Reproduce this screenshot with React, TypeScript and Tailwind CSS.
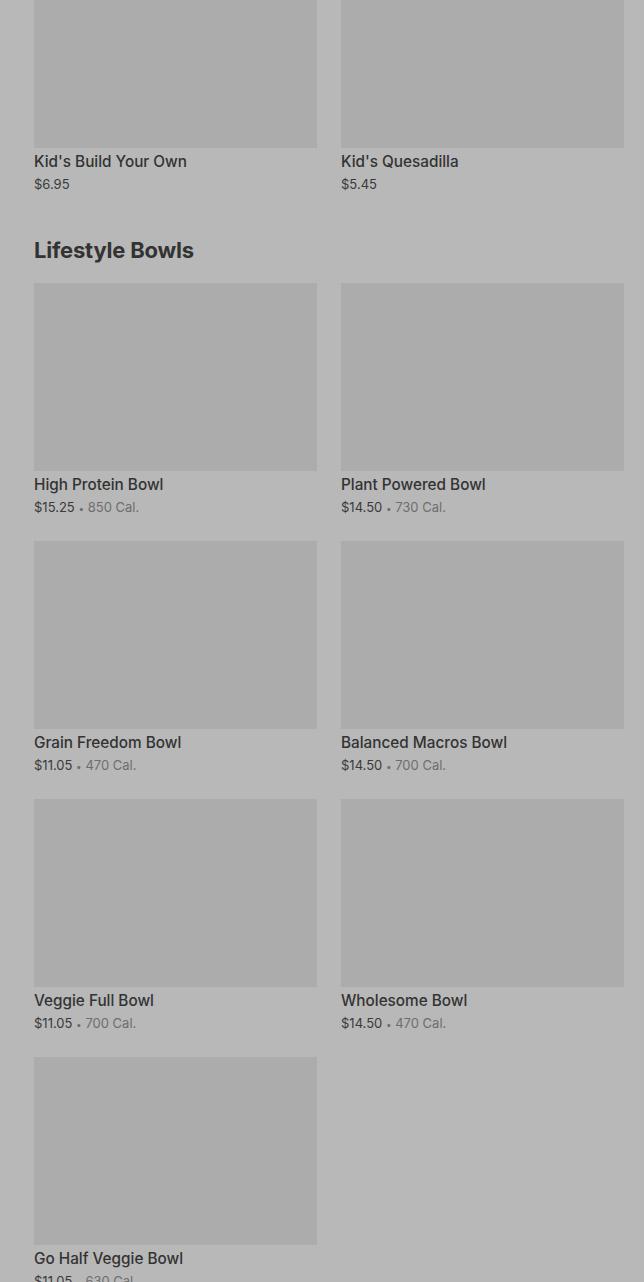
import React from "react";

interface TItem {
  name: string;
  price: string;
  cal?: string;
}

const kids: TItem[] = [
  { name: "Kid's Build Your Own", price: "$6.95" },
  { name: "Kid's Quesadilla", price: "$5.45" },
];

const bowls: TItem[] = [
  { name: "High Protein Bowl", price: "$15.25", cal: "850 Cal." },
  { name: "Plant Powered Bowl", price: "$14.50", cal: "730 Cal." },
  { name: "Grain Freedom Bowl", price: "$11.05", cal: "470 Cal." },
  { name: "Balanced Macros Bowl", price: "$14.50", cal: "700 Cal." },
  { name: "Veggie Full Bowl", price: "$11.05", cal: "700 Cal." },
  { name: "Wholesome Bowl", price: "$14.50", cal: "470 Cal." },
  { name: "Go Half Veggie Bowl", price: "$11.05", cal: "630 Cal." },
];

function MenuCard({ item }: { item: TItem }) {
  return (
    <div className="flex flex-col">
      <div className="h-[188px] w-full bg-[#acacac]" />
      <div className="mt-[4px] text-[15.3px] leading-[20px] text-[#333333] font-medium">
        {item.name}
      </div>
      <div className="mt-[3px] text-[13px] leading-[18px] text-[#3a3a3a]">
        {item.price}
        {item.cal && (
          <span className="text-[#6e6e6e]">
            {" "}
            <span className="text-[10px]">•</span> {item.cal}
          </span>
        )}
      </div>
    </div>
  );
}

export default function App() {
  return (
    <div
      className="min-h-[1282px] w-full overflow-hidden bg-[#b8b8b8] pl-[34px] pr-[20px]"
      style={{ fontFamily: "Inter, 'Noto Sans', sans-serif" }}
    >
      <div className="-mt-[40px] grid grid-cols-2 gap-x-[24px] gap-y-[24px]">
        {kids.map((k) => (
          <MenuCard key={k.name} item={k} />
        ))}
      </div>

      <h2 className="mt-[43px] mb-[19px] text-[22px] leading-[28px] font-bold tracking-[-0.2px] text-[#333333]">
        Lifestyle Bowls
      </h2>

      <div className="grid grid-cols-2 gap-x-[24px] gap-y-[24px]">
        {bowls.map((b) => (
          <MenuCard key={b.name} item={b} />
        ))}
      </div>
    </div>
  );
}
